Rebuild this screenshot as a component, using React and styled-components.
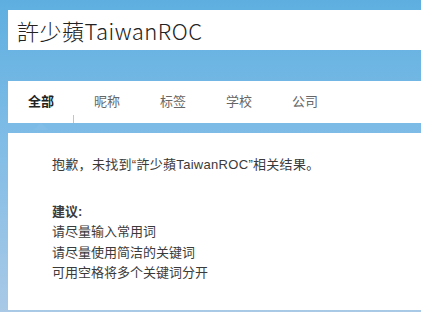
import React from 'react';
import styled, { createGlobalStyle } from 'styled-components';

const GlobalStyle = createGlobalStyle`
  html, body {
    margin: 0;
    padding: 0;
  }
  body {
    width: 421px;
    height: 312px;
    overflow: hidden;
    font-family: "Liberation Sans", "Noto Sans CJK SC", sans-serif;
    background: linear-gradient(180deg, #5eafe0 0%, #7cbbe6 40%, #a9c9e6 100%);
  }
`;

const tabs = ['全部', '昵称', '标签', '学校', '公司'];
const tips = ['请尽量输入常用词', '请尽量使用简洁的关键词', '可用空格将多个关键词分开'];

const App = () => {
  return (
    <Page>
      <GlobalStyle />
      <SearchBox>許少蘋TaiwanROC</SearchBox>
      <TabBar>
        {tabs.map((tab, i) => (
          <Tab key={tab} $active={i === 0}>
            {tab}
          </Tab>
        ))}
        <Divider />
      </TabBar>
      <ResultPanel>
        <Notice>抱歉，未找到“許少蘋TaiwanROC”相关结果。</Notice>
        <TipTitle>建议:</TipTitle>
        {tips.map(tip => (
          <Tip key={tip}>{tip}</Tip>
        ))}
      </ResultPanel>
    </Page>
  );
};

export default App;

const Page = styled.div`
  display: flex;
  flex-direction: column;
  padding: 10px 0 0 8px;
  height: 312px;
  box-sizing: border-box;
`;
const SearchBox = styled.div`
  display: flex;
  align-items: center;
  height: 40px;
  padding-left: 9px;
  font-family: "Noto Sans CJK SC", sans-serif;
  font-size: 22px;
  font-weight: 300;
  letter-spacing: 0.5px;
  color: #222;
  background-color: #fff;
`;
const TabBar = styled.div`
  position: relative;
  display: flex;
  align-items: center;
  gap: 40px;
  height: 42px;
  margin-top: 31px;
  padding-left: 20px;
  padding-bottom: 4px;
  box-sizing: border-box;
  background-color: #fff;
`;
const Tab = styled.div`
  position: relative;
  font-family: "Noto Sans CJK SC", sans-serif;
  font-size: 13px;
  font-weight: ${p => (p.$active ? 700 : 400)};
  color: ${p => (p.$active ? '#222' : '#666')};
  &::after {
    content: '';
    display: ${p => (p.$active ? 'block' : 'none')};
    position: absolute;
    left: 50%;
    bottom: -20px;
    margin-left: -7px;
    border-left: 7px solid transparent;
    border-right: 7px solid transparent;
    border-bottom: 7px solid #82bde7;
  }
`;
const Divider = styled.span`
  position: absolute;
  left: 65px;
  bottom: 0;
  width: 1px;
  height: 8px;
  background-color: #a9cbe6;
`;
const ResultPanel = styled.div`
  flex: 1;
  margin-top: 10px;
  margin-bottom: 2px;
  padding: 22px 0 0 44px;
  font-family: "Liberation Sans", "Noto Sans CJK SC", sans-serif;
  font-size: 13px;
  line-height: 20.5px;
  color: #3a3a3a;
  background-color: #fff;
`;
const Notice = styled.p`
  margin: 0 0 26px;
  letter-spacing: 0.3px;
`;
const TipTitle = styled.p`
  margin: 0;
  font-weight: 700;
`;
const Tip = styled.p`
  margin: 0;
`;
